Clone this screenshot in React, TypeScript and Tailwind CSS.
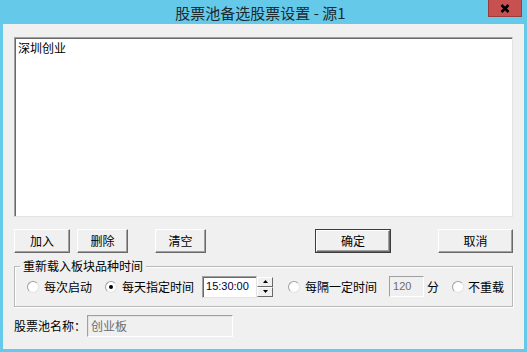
import React from 'react'

const cjk = '"Noto Sans CJK SC", "Liberation Sans", sans-serif'

function Btn({ label, w, ml, def }: { label: string; w: string; ml: string; def?: boolean }) {
  return (
    <div className={`${ml} ${w} h-[24px] ${def ? 'border border-[#3c3c3c]' : ''}`}>
      <div className="w-full h-full flex items-center justify-center bg-[#f0f0f0] border border-t-white border-l-white border-r-[#696969] border-b-[#696969] shadow-[inset_-1px_-1px_0_#a0a0a0] text-[12px] leading-none text-black">
        {label}
      </div>
    </div>
  )
}

function Radio({ checked, ml }: { checked?: boolean; ml: string }) {
  return (
    <div className={`${ml} w-[12px] h-[12px] rounded-full bg-white border border-t-[#a0a0a0] border-l-[#a0a0a0] border-r-[#e3e3e3] border-b-[#e3e3e3] flex items-center justify-center shrink-0`}>
      {checked && <div className="w-[4px] h-[4px] rounded-full bg-black" />}
    </div>
  )
}

function SpinBtn({ up }: { up?: boolean }) {
  return (
    <div className="w-[16px] h-[11px] bg-[#f0f0f0] border border-t-white border-l-white border-r-[#696969] border-b-[#696969] flex items-center justify-center">
      <svg width="5" height="3" viewBox="0 0 5 3">
        {up ? <path d="M2.5 0 L5 3 L0 3 Z" fill="#000" /> : <path d="M0 0 L5 0 L2.5 3 Z" fill="#000" />}
      </svg>
    </div>
  )
}

export default function App() {
  return (
    <div className="w-[527px] h-[352px] bg-[#65c9e9] flex flex-col px-[3px] pb-[3px]" style={{ fontFamily: cjk }}>
      {/* Title bar */}
      <div className="h-[24px] relative flex items-center justify-center pr-[6px] shrink-0">
        <span className="text-[15px] leading-none text-[#1c2a30]">股票池备选股票设置 - 源1</span>
        <div className="absolute left-[485px] top-0 w-[34px] h-[17px] bg-[#c75050] border border-t-0 border-[#9a3c3c] flex items-center justify-center">
          <svg width="10" height="9" viewBox="0 0 10 9">
            <path d="M1.5 1 L8.5 8 M8.5 1 L1.5 8" stroke="#000" strokeWidth="2.6" />
          </svg>
        </div>
      </div>

      {/* Client area */}
      <div className="flex-1 bg-[#f0f0f0] flex flex-col pl-[11px] pt-[13px]">
        {/* Listbox */}
        <div className="w-[499px] h-[180px] bg-white border border-t-[#a0a0a0] border-l-[#a0a0a0] border-r-[#e3e3e3] border-b-[#e3e3e3] shadow-[inset_1px_1px_0_#696969] pl-[3px] pt-[3px]">
          <div className="text-[12px] leading-[14px] text-black">深圳创业</div>
        </div>

        {/* Buttons */}
        <div className="flex mt-[12px]">
          <Btn label="加入" w="w-[56px]" ml="ml-0" />
          <Btn label="删除" w="w-[51px]" ml="ml-[7px]" />
          <Btn label="清空" w="w-[51px]" ml="ml-[27px]" />
          <Btn label="确定" w="w-[76px]" ml="ml-[109px]" def />
          <Btn label="取消" w="w-[75px]" ml="ml-[47px]" />
        </div>

        {/* Group box */}
        <div className="relative mt-[13px] w-[499px] h-[41px] border border-[#b9b9b9] shadow-[inset_1px_1px_0_#fff,1px_1px_0_#fff]">
          <div className="absolute left-[5px] -top-[9px] px-[3px] bg-[#f0f0f0] text-[12px] leading-[16px] text-black">
            重新载入板块品种时间
          </div>
          <div className="flex items-center h-full text-[12px] leading-none text-black">
            <Radio ml="ml-[12px]" />
            <span className="ml-[5px]">每次启动</span>
            <Radio ml="ml-[13px]" checked />
            <span className="ml-[5px]">每天指定时间</span>
            <div className="ml-[8px] w-[55px] h-[22px] bg-white border border-t-[#a0a0a0] border-l-[#a0a0a0] border-r-[#e3e3e3] border-b-[#e3e3e3] shadow-[inset_1px_1px_0_#696969] flex items-center pl-[3px] text-[11px] text-[#000040]" style={{ fontFamily: '"Liberation Sans", sans-serif' }}>
              15:30:00
            </div>
            <div className="flex flex-col justify-between h-[22px] py-[1px]">
              <SpinBtn up />
              <SpinBtn />
            </div>
            <Radio ml="ml-[15px]" />
            <span className="ml-[5px]">每隔一定时间</span>
            <div className="ml-[12px] w-[35px] h-[21px] bg-[#f0f0f0] border border-t-[#a0a0a0] border-l-[#a0a0a0] border-r-white border-b-white flex items-center pl-[3px] text-[11px] text-[#6d6d6d]" style={{ fontFamily: '"Liberation Sans", sans-serif' }}>
              120
            </div>
            <span className="ml-[3px]">分</span>
            <Radio ml="ml-[13px]" />
            <span className="ml-[4px]">不重载</span>
          </div>
        </div>

        {/* Pool name */}
        <div className="flex items-center mt-[8px]">
          <span className="text-[12px] leading-none text-black">股票池名称：</span>
          <div className="ml-[1px] w-[146px] h-[22px] bg-[#f0f0f0] border border-t-[#a0a0a0] border-l-[#a0a0a0] border-r-white border-b-white shadow-[inset_1px_1px_0_#e3e3e3] flex items-center pl-[3px] text-[12px] text-[#6d6d6d]">
            创业板
          </div>
        </div>
      </div>
    </div>
  )
}
